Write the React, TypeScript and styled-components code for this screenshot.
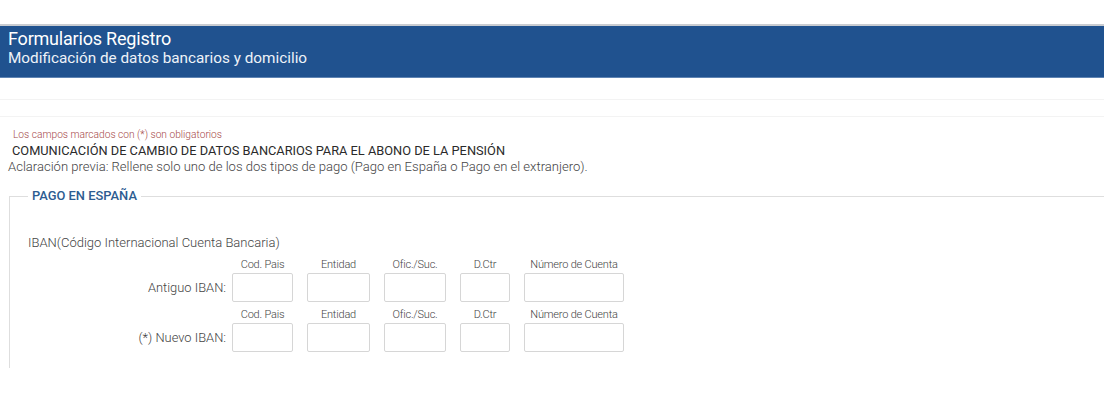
import styled, { createGlobalStyle } from "styled-components"

const GlobalStyle = createGlobalStyle`
    body{
        margin: 0;
        background: #fff;
        font-family: Roboto, "Liberation Sans", sans-serif;
        color: #555;
    }
`

interface FieldDef {
    caption: string
    width: number
}

const fields: FieldDef[] = [
    { caption: "Cod. Pais", width: 61 },
    { caption: "Entidad", width: 63 },
    { caption: "Ofic./Suc.", width: 62 },
    { caption: "D.Ctr", width: 50 },
    { caption: "Número de Cuenta", width: 100 },
]

function IbanRow({label}: {label: string}) {
    return (
        <Row>
            <RowLabel>{label}</RowLabel>
            <Fields>
                {fields.map((f)=>(
                    <Field key={f.caption} $w={f.width}>
                        <Caption>{f.caption}</Caption>
                        <Input type="text" />
                    </Field>
                ))}
            </Fields>
        </Row>
    )
}

export default function App() {
    return (
        <>
            <GlobalStyle />
            <Page>
                <Header>
                    <Title>Formularios Registro</Title>
                    <Subtitle>Modificación de datos bancarios y domicilio</Subtitle>
                </Header>
                <Strip />
                <Form>
                    <Required>Los campos marcados con (*) son obligatorios</Required>
                    <Heading>COMUNICACIÓN DE CAMBIO DE DATOS BANCARIOS PARA EL ABONO DE LA PENSIÓN</Heading>
                    <Note>Aclaración previa: Rellene solo uno de los dos tipos de pago (Pago en España o Pago en el extranjero).</Note>
                    <Fieldset>
                        <Legend>PAGO EN ESPAÑA</Legend>
                        <IbanTitle>IBAN(Código Internacional Cuenta Bancaria)</IbanTitle>
                        <Rows>
                            <IbanRow label="Antiguo IBAN:" />
                            <IbanRow label="(*) Nuevo IBAN:" />
                        </Rows>
                    </Fieldset>
                </Form>
            </Page>
        </>
    )
}

const Page = styled.div`
    padding-top: 24px;
    width: 1104px;
    overflow: hidden;
`
const Header = styled.header`
    background: #20528f;
    border-top: 2px solid #c9ccd1;
    border-bottom: 1px solid #5f84b3;
    height: 49px;
    padding: 2px 8px 0;
    box-sizing: content-box;
    color: #fff;
`
const Title = styled.div`
    font-size: 18px;
    line-height: 21px;
    letter-spacing: -0.2px;
`
const Subtitle = styled.div`
    font-size: 15.3px;
    line-height: 18px;
    color: #eef2f8;
`
const Strip = styled.div`
    margin-top: 21px;
    height: 16px;
    border-top: 1px solid #f3f3f3;
    border-bottom: 1px solid #f3f3f3;
`
const Form = styled.div`
    padding-top: 10px;
`
const Required = styled.div`
    padding-left: 13px;
    font-size: 10.2px;
    line-height: 16px;
    font-weight: 300;
    color: #a54848;
`
const Heading = styled.div`
    padding-left: 12px;
    font-size: 12.8px;
    line-height: 16px;
    color: #2a2a2a;
`
const Note = styled.div`
    padding-left: 8px;
    font-size: 13.05px;
    line-height: 16px;
    font-weight: 300;
    color: #444;
`
const Fieldset = styled.fieldset`
    margin: 14px -20px 0 9px;
    padding: 0 0 16px 18px;
    border: none;
    border-top: 1px solid #dedede;
    border-left: 1px solid #dedede;
`
const Legend = styled.legend`
    margin-left: 0;
    padding: 0 4px;
    font-size: 12.9px;
    line-height: 14px;
    font-weight: 500;
    color: #2d5c91;
`
const IbanTitle = styled.div`
    margin-top: 33px;
    font-size: 13px;
    line-height: 14px;
    font-weight: 300;
    color: #444;
`
const Rows = styled.div`
    margin-top: 9px;
    display: flex;
    flex-direction: column;
    gap: 7px;
`
const Row = styled.div`
    display: flex;
    align-items: flex-end;
`
const RowLabel = styled.div`
    width: 198px;
    margin-right: 6px;
    height: 29px;
    line-height: 29px;
    text-align: right;
    font-size: 12.9px;
    font-weight: 300;
    color: #444;
`
const Fields = styled.div`
    display: flex;
    gap: 14px;
`
const Field = styled.div<{$w: number}>`
    width: ${p=>p.$w}px;
    display: flex;
    flex-direction: column;
    align-items: center;
`
const Caption = styled.div`
    font-size: 11px;
    line-height: 12px;
    letter-spacing: -0.2px;
    font-weight: 300;
    color: #444;
    margin-bottom: 2px;
    white-space: nowrap;
`
const Input = styled.input`
    width: 100%;
    height: 29px;
    box-sizing: border-box;
    border: 1px solid #d6d6d6;
    border-radius: 2px;
    background: #fff;
    outline: none;
`
